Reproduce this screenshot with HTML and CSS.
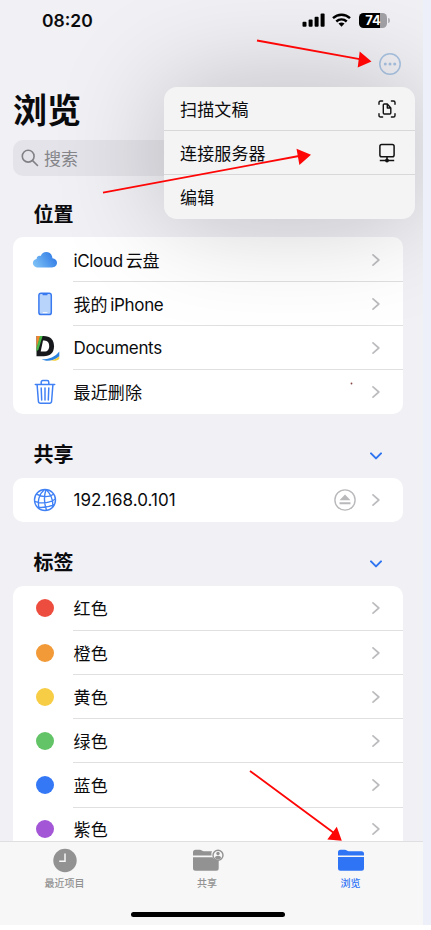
FILE: index.html
```html
<!DOCTYPE html>
<html lang="zh-CN">
<head>
<meta charset="utf-8">
<title>浏览</title>
<link rel="stylesheet" href="styles.css">
</head>
<body>
<svg class="defs" width="0" height="0" aria-hidden="true">
  <symbol id="chev" viewBox="0 0 8 12"><path d="M1 .9 6.8 6 1 11.1" fill="none" stroke="currentColor" stroke-width="1.7" stroke-linecap="round" stroke-linejoin="round"/></symbol>
  <symbol id="down" viewBox="0 0 12 8"><path d="M1 1.4 6 6.4 11 1.4" fill="none" stroke="currentColor" stroke-width="2" stroke-linecap="round" stroke-linejoin="round"/></symbol>
</svg>
<div class="phone">
  <header class="status">
    <span class="time">08:20</span>
    <div class="indicators">
      <svg width="23" height="14" viewBox="0 0 23 14"><rect x=".5" y="8.8" width="4" height="5" rx="1"/><rect x="6.6" y="6.6" width="4" height="7.2" rx="1"/><rect x="12.6" y="3.7" width="4" height="10.1" rx="1"/><rect x="18.6" y=".5" width="4" height="13.3" rx="1"/></svg>
      <svg class="wifi" width="19" height="14" viewBox="0 0 19 14"><g fill="none" stroke="#000" stroke-width="2.4"><path d="M1 5.2C5.8.6 13.2.6 18 5.2"/><path d="M4.3 8.5C7.3 5.7 11.7 5.7 14.7 8.5"/></g><path d="M6.5 10.6Q9.5 8.3 12.5 10.6L9.5 13.7Z"/></svg>
      <div class="battery"><span>74</span></div><i class="nub"></i>
    </div>
  </header>
  <div class="nav">
    <svg width="24" height="24" viewBox="0 0 24 24"><circle cx="12" cy="12" r="10.2" fill="none" stroke="#a9c3e2" stroke-width="1.5"/><g fill="#a9c3e2"><circle cx="7.3" cy="12" r="1.5"/><circle cx="12" cy="12" r="1.5"/><circle cx="16.7" cy="12" r="1.5"/></g></svg>
  </div>
  <h1>浏览</h1>
  <div class="search">
    <svg width="18" height="18" viewBox="0 0 18 18"><g fill="none" stroke="#808085" stroke-width="1.6" stroke-linecap="round"><circle cx="7.2" cy="7.2" r="5.9"/><path d="m11.6 11.6 4.9 4.9"/></g></svg>
    <span>搜索</span>
  </div>
  <main>
    <h2><span>位置</span></h2>
    <section class="card">
      <div class="row">
        <div class="icon"><svg width="26" height="18" viewBox="0 0 26 18"><defs><linearGradient id="cloud" x1="0" x2="1" y1=".7" y2=".3"><stop stop-color="#7cc0f6"/><stop offset="1" stop-color="#2e79e5"/></linearGradient></defs><path d="M6.3 16.5C3.2 16.5.9 14.7.9 12c0-2.4 1.7-3.9 3.7-4.1C4.7 5.7 6.7 4.4 8.7 5 9.8 2.5 11.7 1 14.2 1c3.6 0 6.1 2.7 6.2 6.2 2.7.3 4.6 2 4.6 4.6 0 2.7-2.1 4.7-5 4.7Z" fill="url(#cloud)"/></svg></div>
        <div class="body"><span class="label latin tight">iCloud<span class="thin"></span><span class="han">云盘</span></span><svg class="chev"><use href="#chev"/></svg></div>
      </div>
      <div class="row">
        <div class="icon"><svg width="16" height="24" viewBox="0 0 16 24"><rect x="1.9" y="1.2" width="12.4" height="21.4" rx="2.2" fill="#b9d4fb" stroke="#3a7af0" stroke-width="1.5"/><path d="M5 1.2h6l-.8 2.1H5.8Z" fill="#3a7af0"/><path d="M5.8 20.6h4.6" stroke="#fff" stroke-width=".9"/></svg></div>
        <div class="body"><span class="label latin tight"><span class="han">我的</span><span class="thin"></span>iPhone</span><svg class="chev"><use href="#chev"/></svg></div>
      </div>
      <div class="row">
        <div class="icon"><svg class="docs" width="25" height="27" viewBox="0 0 25 27"><path d="M1.5 2H8.5C15.5 2 19 6 19 12.2S15.5 22.2 8.5 22.2H1.5Z" fill="#17181c"/><path d="M8 6.5h1.5c3.1 0 4.7 2.1 4.7 5.5s-1.6 5.6-4.7 5.600H5.700Z" fill="#fff"/><path d="M1.500 2h4L1.500 15Z" fill="#f5862b"/><path d="M5 2h2.600L3.500 15.500l-2 2v-4Z" fill="#4ab848"/><path d="M6.500 25.500c7.500 0 14-2.700 17.800-8v4.700c-3 3.100-8.300 4.700-13 4.600Z" fill="#2c83df"/><path d="M14.500 26.800c4.300-.7 7.800-2.400 9.800-4.600v2.500c-1.300 1.500-3.200 2.100-5 2.100Z" fill="#f5ce3b"/></svg></div>
        <div class="body"><span class="label latin tight">Documents</span><svg class="chev"><use href="#chev"/></svg></div>
      </div>
      <div class="row">
        <div class="icon"><svg width="22" height="26" viewBox="0 0 22 26"><g fill="none" stroke="#4080f5" stroke-width="1.5" stroke-linecap="round" stroke-linejoin="round"><path d="M1.300 5.500h19.400M7.200 5.200V3.200Q7.200 1.500 8.900 1.500h4.200q1.700 0 1.700 1.700v2M3.100 5.800l1.300 16.500q.2 2 2.100 2h9q1.900 0 2.100-2l1.300-16.500"/><path d="m7.200 9 .5 12M11 9v12M14.800 9l-.5 12"/></g></svg></div>
        <div class="body"><span class="label">最近删除</span><svg class="chev"><use href="#chev"/></svg></div>
      </div>
    </section>
    <h2><span>共享</span><svg class="down"><use href="#down"/></svg></h2>
    <section class="card">
      <div class="row">
        <div class="icon"><svg width="24" height="24" viewBox="0 0 24 24"><g fill="none" stroke="#4081f5" stroke-width="1.4"><circle cx="12" cy="12" r="10.500"/><path d="M11.500 1.500C6 6 4 13.500 6.300 20.700M13 1.500c-2 6-2 14 .6 21M13 1.500c4.500 4 7.200 10.500 6.900 17.600M3.600 6.100C9 9.400 16 9.400 20.600 6.200M1.600 13.300c6.500 2.300 14.700 1.800 20.800-2.300M4.500 19.300c5.700.6 11.500-.1 16.800-2.600"/></g></svg></div>
        <div class="body"><span class="label latin ip">192.168.0.101</span><svg class="eject" width="22" height="22" viewBox="0 0 22 22"><circle cx="11" cy="11" r="10.100" fill="none" stroke="#b9b9bc" stroke-width="1.4"/><path d="m11 5.500 5.500 5.800h-11ZM5.500 13.200h11v2h-11Z" fill="#b9b9bc"/></svg><svg class="chev"><use href="#chev"/></svg></div>
      </div>
    </section>
    <h2><span>标签</span><svg class="down"><use href="#down"/></svg></h2>
    <section class="card">
      <div class="row"><div class="icon"><i class="dot red"></i></div><div class="body"><span class="label">红色</span><svg class="chev"><use href="#chev"/></svg></div></div>
      <div class="row"><div class="icon"><i class="dot orange"></i></div><div class="body"><span class="label">橙色</span><svg class="chev"><use href="#chev"/></svg></div></div>
      <div class="row"><div class="icon"><i class="dot yellow"></i></div><div class="body"><span class="label">黄色</span><svg class="chev"><use href="#chev"/></svg></div></div>
      <div class="row"><div class="icon"><i class="dot green"></i></div><div class="body"><span class="label">绿色</span><svg class="chev"><use href="#chev"/></svg></div></div>
      <div class="row"><div class="icon"><i class="dot blue"></i></div><div class="body"><span class="label">蓝色</span><svg class="chev"><use href="#chev"/></svg></div></div>
      <div class="row"><div class="icon"><i class="dot purple"></i></div><div class="body"><span class="label">紫色</span><svg class="chev"><use href="#chev"/></svg></div></div>
    </section>
  </main>
  <footer>
    <nav class="tabs">
      <div class="tab"><svg width="26" height="25" viewBox="0 0 26 25"><circle cx="13" cy="12.500" r="11.700" fill="#929292"/><path d="M13 5.500v7.700H7.200" fill="none" stroke="#f7f7f7" stroke-width="1.500"/></svg><span>最近项目</span></div>
      <div class="tab middle"><svg width="34" height="25" viewBox="0 0 34 25"><g fill="#929292"><path d="M3 7.500V4.200Q3 1.700 5.500 1.700h4.200q1.300 0 2.200.8.800.7 1.900.7H22q-1.200 2-.5 4.300Z"/><path d="M3 9.300h19.500q1.700 2.700 6.200 2.800v8.100q0 2.500-2.500 2.500H5.500Q3 22.700 3 20.200Z"/></g><circle cx="28" cy="7.300" r="5" fill="#f7f7f7" stroke="#929292" stroke-width="1.400"/><circle cx="28" cy="5.500" r="1.700" fill="#929292"/><path d="M24.800 10q.3-2.200 3.200-2.200t3.200 2.200q-1.300 1.400-3.200 1.400T24.800 10Z" fill="#929292"/></svg><span>共享</span></div>
      <div class="tab active"><svg width="28" height="25" viewBox="0 0 28 25"><path d="M1 7.500V4.200q0-2.500 2.500-2.500h4.200q1.300 0 2.200.8.800.7 1.900.7h12.700Q27 3.200 27 5.700v1.800ZM1 9h26v11.200q0 2.500-2.500 2.500h-21Q1 22.700 1 20.200Z" fill="#2f74f5"/></svg><span>浏览</span></div>
    </nav>
    <div class="home"></div>
  </footer>
  <div class="menu">
    <div class="item"><span>扫描文稿</span><svg width="18" height="18" viewBox="0 0 18 18"><g fill="none" stroke="#111" stroke-width="1.4" stroke-linecap="round" stroke-linejoin="round"><path d="M1 4.300V2.600Q1 1 2.600 1h2M13.400 1h2Q17 1 17 2.600v1.700M17 13.700v1.700q0 1.600-1.600 1.600h-2M4.600 17h-2Q1 17 1 15.400v-1.700"/><path d="M5.300 5q0-1 1-1h3l3.500 4v5q0 1-1 1H6.300q-1 0-1-1ZM9.300 4v4h3.500"/></g></svg></div>
    <div class="item"><span>连接服务器</span><svg width="18" height="20" viewBox="0 0 18 20"><g fill="none" stroke="#111" stroke-width="1.500"><rect x="1.900" y="1.500" width="14.200" height="12.200" rx="1.800"/><path d="M9 13.700v3.600M1.800 17.600h14.400"/></g><circle cx="9" cy="17.500" r="1.900" fill="#111"/></svg></div>
    <div class="item"><span>编辑</span></div>
  </div>
</div>
<svg class="arrows" width="431" height="930" viewBox="0 0 431 930"><g stroke="#fe0606" stroke-width="1.800"><path d="M257 40.500 361 59.300M103 192.700 299 156M250 771l84 62"/></g><path d="m371.500 61.500-11.800-10-2 15.900ZM311 154.700l-14.500-6 2.900 16.300ZM341.800 840.700l-5-14-9.500 12.700Z" fill="#fe0606"/><circle cx="351.500" cy="383.500" r=".9" fill="#844"/></svg>
</body>
</html>
```
FILE: styles.css
```css
* { box-sizing: border-box; }
body {
  margin: 0;
  width: 431px;
  height: 930px;
  overflow: hidden;
  position: relative;
  background: linear-gradient(#eef0f9, #eef0f9) no-repeat right top / 8px 925px, #fff;
  color: #0b0b0d;
  font-family: Inter, "Noto Sans CJK SC", sans-serif;
}
svg { display: block; flex: none; }
.defs { position: absolute; }
.phone {
  position: relative;
  width: 423px;
  height: 925px;
  overflow: hidden;
  background: #f0f0f5;
  display: flex;
  flex-direction: column;
}
.status {
  height: 40px;
  flex: none;
  display: flex;
  justify-content: space-between;
  align-items: center;
  padding: 0 33px 0 42px;
}
.time { font-size: 17.5px; font-weight: 600; padding-top: 1px; }
.indicators { display: flex; align-items: center; }
.wifi { margin: 0 8px 0 7px; }
.battery {
  width: 28px;
  height: 15px;
  border-radius: 4.5px;
  background: linear-gradient(90deg, #000 75%, #a2a2a6 75%);
  color: #fff;
  font-size: 13px;
  font-weight: 700;
  line-height: 15px;
  text-align: center;
}
.nub { width: 2px; height: 5px; margin-left: 1px; border-radius: 0 2px 2px 0; background: #b5b5b9; }
.nav { height: 48px; flex: none; display: flex; justify-content: flex-end; padding: 12px 21px 0 0; }
h1 { margin: 0; height: 52px; flex: none; padding-left: 13px; font-size: 34px; line-height: 45px; font-weight: 700; }
.search {
  margin: 0 20px 0 13px;
  height: 36px;
  flex: none;
  border-radius: 10px;
  background: #e3e3e9;
  display: flex;
  align-items: center;
  gap: 5px;
  padding-left: 8px;
  color: #85858a;
  font-size: 17px;
}
.search span { padding-bottom: 2px; }
main { flex: 1; min-height: 0; overflow: hidden; padding: 0 20px 0 13px; }
h2 {
  display: flex;
  justify-content: space-between;
  align-items: center;
  margin: 0;
  height: 64px;
  padding: 19px 21px 0 20.5px;
  font-size: 20px;
  line-height: 28px;
  font-weight: 700;
}
h2:first-child { height: 61px; padding-top: 16px; }
.down { width: 12px; height: 8px; color: #2f74f0; margin-top: 1px; }
.card { border-radius: 10px; background: #fff; overflow: hidden; }
.row { height: 44.17px; display: flex; }
.row + .row .body { border-top: 1px solid #e0e0e2; }
.icon { width: 60px; flex: none; display: flex; align-items: center; justify-content: center; padding: 1px 0 0 4px; }
.docs { margin-left: 4px; }
.body {
  flex: 1;
  display: flex;
  align-items: center;
  justify-content: space-between;
  border-top: 1px solid transparent;
  padding: 0 23px 0 .5px;
  font-size: 17px;
}
.label { padding-bottom: 1px; letter-spacing: .15px; }
.latin { padding-bottom: 0; }
.tight { letter-spacing: -.35px; }
.han { letter-spacing: -.1px; }
.ip { letter-spacing: .05px; }
.chev { width: 8px; height: 12px; color: #bcbcbf; }
.thin { margin-left: 3px; }
.eject { margin-left: auto; margin-right: 16px; }
.dot { width: 18px; height: 18px; border-radius: 50%; }
.red { background: #ed4d3e; }
.orange { background: #f19a37; }
.yellow { background: #f7cd46; }
.green { background: #62c466; }
.blue { background: #3478f6; }
.purple { background: #a357d7; }
footer { height: 84px; flex: none; background: #f7f7f7; border-top: 1px solid #dfdfe1; }
.tabs { height: 70px; padding: 6px 0 0; display: flex; justify-content: space-between; }
.tab { width: 129px; display: flex; flex-direction: column; align-items: center; gap: 3px; color: #929292; font-size: 10px; line-height: 15px; font-weight: 500; }
.middle { margin-left: 7px; }
.tab.active { color: #2f74f5; width: 145px; }
.home { width: 154px; height: 5px; margin: 0 auto 0 131px; border-radius: 3px; background: #000; }
.menu {
  position: absolute;
  left: 164px;
  top: 87px;
  width: 251px;
  height: 132px;
  border-radius: 13px;
  background: #f4f4f5;
  box-shadow: 0 0 110px rgba(0, 0, 0, .22);
}
.item { height: 44px; display: flex; align-items: center; justify-content: space-between; padding: 0 19px 0 16px; font-size: 17px; border-bottom: 1px solid #d8d8da; letter-spacing: .15px; }
.item span { padding-bottom: 1px; }
.item:last-child { border-bottom: 0; }
.item:last-child span { padding-bottom: 2px; }
.arrows { position: absolute; left: 0; top: 0; pointer-events: none; }
```
